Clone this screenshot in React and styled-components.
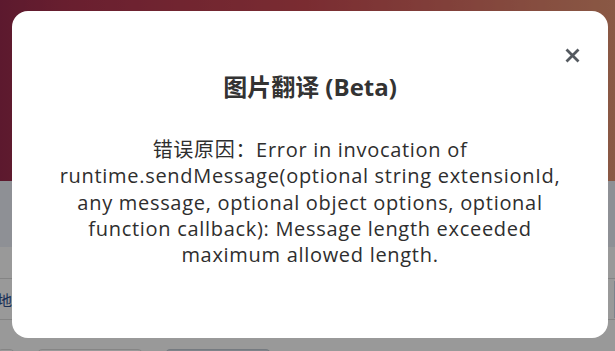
import React from "react";
import styled, { createGlobalStyle } from "styled-components";

const GlobalStyle = createGlobalStyle`
  html, body { margin: 0; padding: 0; overflow: hidden; }
  body { font-family: "Open Sans", "Noto Sans CJK SC", sans-serif; }
`;

const Page = styled.div`
  width: 615px;
  height: 351px;
  overflow: hidden;
  display: flex;
  flex-direction: column;
  background: #ffffff;
`;

const Header = styled.div`
  height: 181px;
  flex: none;
  background: linear-gradient(90deg, #9a2b4e 0%, #b0344f 12%, #cc4a53 50%, #e69473 100%);
`;

const Band = styled.div`
  height: 66px;
  flex: none;
  background: #edf0f8;
`;

const InputRow = styled.div`
  margin-top: 31px;
  height: 40px;
  flex: none;
  display: flex;
  align-items: center;
  justify-content: space-between;
  border-top: 1px solid #dcdcdc;
  border-bottom: 1px solid #dcdcdc;
  overflow: hidden;
`;

const FieldLabel = styled.span`
  margin-left: -3px;
  font-size: 15px;
  color: #2b4f8f;
  font-family: "Noto Sans CJK SC", sans-serif;
`;

const SideButton = styled.span`
  width: 8px;
  height: 37px;
  margin-right: -7px;
  background: #cdd9e8;
`;

const ButtonRow = styled.div`
  margin-top: 29px;
  display: flex;
  gap: 22px;
  flex: none;
`;

const Pill = styled.span`
  height: 20px;
  width: ${(p) => p.w}px;
  margin-left: ${(p) => p.ml || 0}px;
  border: 1px solid ${(p) => (p.filled ? "#c4ccd6" : "#dedede")};
  background: ${(p) => (p.filled ? "#d4dde6" : "#ffffff")};
  border-radius: 5px;
`;

const Overlay = styled.div`
  position: fixed;
  inset: 0;
  background: rgba(0, 0, 0, 0.4);
  padding: 11px 0 0 12px;
  box-sizing: border-box;
`;

const Modal = styled.div`
  position: relative;
  width: 596px;
  height: 327px;
  box-sizing: border-box;
  background: #ffffff;
  border-radius: 16px;
  padding: 60px 38px 0;
  text-align: center;
  color: #333333;
`;

const CloseButton = styled.button`
  position: absolute;
  top: 37px;
  right: 28px;
  width: 15px;
  height: 15px;
  padding: 0;
  border: 0;
  background: transparent;
  display: flex;
  cursor: pointer;
`;

const Title = styled.h2`
  margin: 0;
  font-size: 24px;
  line-height: 32px;
  font-weight: 700;
  color: #333333;
`;

const Message = styled.p`
  margin: 34px 0 0;
  font-size: 20px;
  line-height: 26.25px;
  letter-spacing: 0.7px;
  color: #2e2e2e;
`;

export default function App() {
  return (
    <>
      <GlobalStyle />
      <Page>
        <Header />
        <Band />
        <InputRow>
          <FieldLabel>地址</FieldLabel>
          <SideButton />
        </InputRow>
        <ButtonRow>
          <Pill w={16} ml={-3} />
          <Pill w={104} />
          <Pill w={104} filled />
        </ButtonRow>
      </Page>
      <Overlay>
        <Modal role="dialog">
          <CloseButton aria-label="关闭">
            <svg width="15" height="15" viewBox="0 0 15 15">
              <path d="M1.5 1.5 L13.5 13.5 M13.5 1.5 L1.5 13.5" stroke="#555a60" strokeWidth="2.8" strokeLinecap="butt" />
            </svg>
          </CloseButton>
          <Title>图片翻译 (Beta)</Title>
          <Message>
            错误原因：Error in invocation of runtime.sendMessage(optional string extensionId, any message, optional object options, optional function callback): Message length exceeded maximum allowed length.
          </Message>
        </Modal>
      </Overlay>
    </>
  );
}
